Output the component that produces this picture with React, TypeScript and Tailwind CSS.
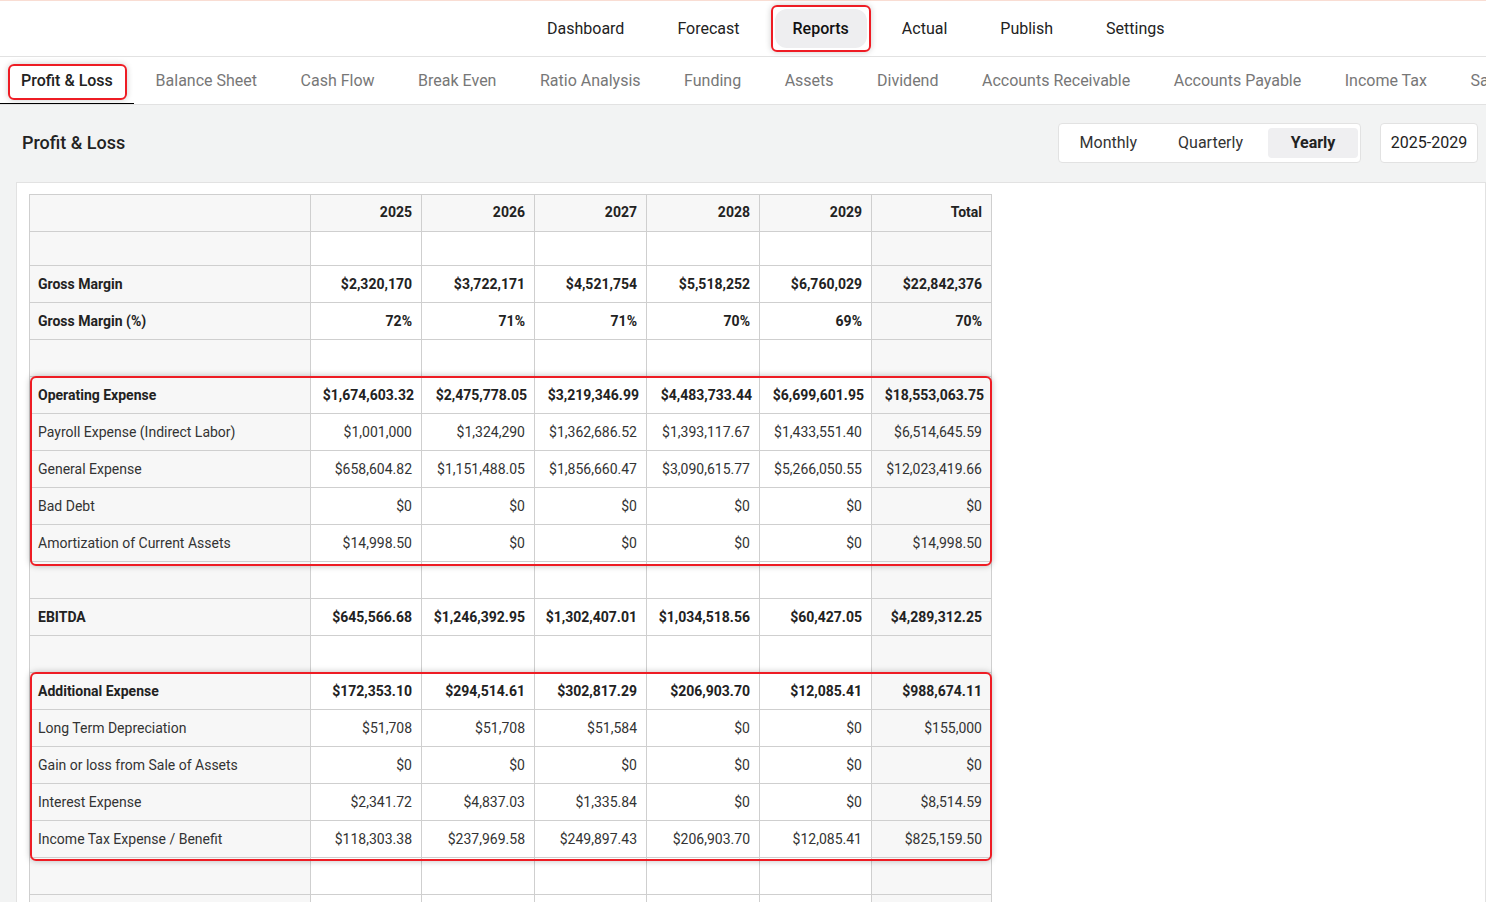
import React from "react";

const topNav = ["Dashboard", "Forecast", "Reports", "Actual", "Publish", "Settings"];
const tabs = [
  "Profit & Loss",
  "Balance Sheet",
  "Cash Flow",
  "Break Even",
  "Ratio Analysis",
  "Funding",
  "Assets",
  "Dividend",
  "Accounts Receivable",
  "Accounts Payable",
  "Income Tax",
  "Sales Tax",
];

type Row = { label?: string; bold?: boolean; values?: string[]; short?: boolean; tight?: boolean };

const z6 = ["$0", "$0", "$0", "$0", "$0", "$0"];

const rows: Row[] = [
  { short: true },
  { label: "Gross Margin", bold: true, values: ["$2,320,170", "$3,722,171", "$4,521,754", "$5,518,252", "$6,760,029", "$22,842,376"] },
  { label: "Gross Margin (%)", bold: true, values: ["72%", "71%", "71%", "70%", "69%", "70%"] },
  {},
  { label: "Operating Expense", bold: true, tight: true, values: ["$1,674,603.32", "$2,475,778.05", "$3,219,346.99", "$4,483,733.44", "$6,699,601.95", "$18,553,063.75"] },
  { label: "Payroll Expense (Indirect Labor)", values: ["$1,001,000", "$1,324,290", "$1,362,686.52", "$1,393,117.67", "$1,433,551.40", "$6,514,645.59"] },
  { label: "General Expense", values: ["$658,604.82", "$1,151,488.05", "$1,856,660.47", "$3,090,615.77", "$5,266,050.55", "$12,023,419.66"] },
  { label: "Bad Debt", values: z6 },
  { label: "Amortization of Current Assets", values: ["$14,998.50", "$0", "$0", "$0", "$0", "$14,998.50"] },
  {},
  { label: "EBITDA", bold: true, values: ["$645,566.68", "$1,246,392.95", "$1,302,407.01", "$1,034,518.56", "$60,427.05", "$4,289,312.25"] },
  {},
  { label: "Additional Expense", bold: true, values: ["$172,353.10", "$294,514.61", "$302,817.29", "$206,903.70", "$12,085.41", "$988,674.11"] },
  { label: "Long Term Depreciation", values: ["$51,708", "$51,708", "$51,584", "$0", "$0", "$155,000"] },
  { label: "Gain or loss from Sale of Assets", values: z6 },
  { label: "Interest Expense", values: ["$2,341.72", "$4,837.03", "$1,335.84", "$0", "$0", "$8,514.59"] },
  { label: "Income Tax Expense / Benefit", values: ["$118,303.38", "$237,969.58", "$249,897.43", "$206,903.70", "$12,085.41", "$825,159.50"] },
  {},
  {},
];

const colWidths = ["w-[281px]", "w-[111px]", "w-[113px]", "w-[112px]", "w-[113px]", "w-[112px]", "w-[120px]"];

export default function App() {
  return (
    <div className="w-[1486px] h-[902px] overflow-hidden bg-[#f2f3f3] text-[#222]" style={{ fontFamily: "Roboto, 'Noto Sans', sans-serif" }}>
      {/* Top nav */}
      <div className="h-px bg-[#f9ddd3]" />
      <div className="bg-white h-[56px] border-b border-[#e2e2e2] flex items-center pl-[529px]">
        <div className="flex items-center gap-[17px]">
          {topNav.map((n) =>
            n === "Reports" ? (
              <div key={n} className="relative">
                <div className="h-[39px] px-[18px] flex items-center rounded-[12px] bg-[#eeeef0] text-[16px] text-[#111] font-medium">{n}</div>
                <div className="absolute -left-[4px] -right-[4px] -top-[4px] -bottom-[4px] border-2 border-[#ee1c24] rounded-[6px] shadow-[0_0_6px_rgba(0,0,0,0.2)] pointer-events-none" />
              </div>
            ) : (
              <div key={n} className="h-[39px] px-[18px] flex items-center text-[16px] text-[#222]">
                {n}
              </div>
            )
          )}
        </div>
      </div>

      {/* Tabs */}
      <div className="bg-white h-[48px] border-b border-[#e2e2e2] flex items-stretch whitespace-nowrap overflow-hidden">
        {tabs.map((t, i) =>
          i === 0 ? (
            <div key={t} className="relative pl-[21px] pr-[21px] pt-[1px] flex items-center border-b-2 border-black -mb-px">
              <span className="text-[16px] text-[#222] font-medium">{t}</span>
              <div className="absolute left-[8px] right-[7px] top-[7px] bottom-[3px] border-2 border-[#ee1c24] rounded-[6px] shadow-[0_0_6px_rgba(0,0,0,0.2)] pointer-events-none" />
            </div>
          ) : (
            <div key={t} className="px-[21.75px] pt-[1px] flex items-center text-[16px] text-[#777]">
              {t}
            </div>
          )
        )}
      </div>

      {/* Title row */}
      <div className="h-[77px] flex items-center pl-[22px] pr-[8px] pb-[2px]">
        <div className="text-[18px] text-[#222] font-medium">Profit &amp; Loss</div>
        <div className="ml-auto flex items-center gap-[19px]">
          <div className="h-[40px] bg-white border border-[#e2e2e2] rounded-[4px] flex items-center pl-[3px] pr-[2px] text-[16px]">
            <div className="px-[18px] h-[30px] flex items-center text-[#333]">Monthly</div>
            <div className="pl-[23px] pr-[25px] h-[30px] flex items-center text-[#333]">Quarterly</div>
            <div className="w-[90px] h-[30px] flex items-center justify-center rounded-[4px] bg-[#efeff1] font-bold text-[#222]">Yearly</div>
          </div>
          <div className="h-[40px] w-[98px] bg-white border border-[#e2e2e2] rounded-[4px] flex items-center justify-center text-[16px] text-[#222]">
            2025-2029
          </div>
        </div>
      </div>

      {/* Card */}
      <div className="ml-[16px] bg-white border border-[#e2e2e2] pt-[11px] pl-[12px] h-[800px]">
        <div className="relative w-[962px]">
          <table className="table-fixed border-collapse text-[14px] text-[#333] w-[962px]">
            <colgroup>
              {colWidths.map((w, i) => (
                <col key={i} className={w} />
              ))}
            </colgroup>
            <thead>
              <tr className="h-[37px]">
                <th className="border border-[#cfcfcf] bg-[#f7f7f7]" />
                {["2025", "2026", "2027", "2028", "2029", "Total"].map((y) => (
                  <th key={y} className="border border-[#cfcfcf] bg-[#f7f7f7] text-right px-[9px] pb-[2px] font-bold text-[#222]">
                    {y}
                  </th>
                ))}
              </tr>
            </thead>
            <tbody>
              {rows.map((r, ri) => (
                <tr key={ri} className={r.short ? "h-[34px]" : "h-[37px]"}>
                  <td className={`border border-[#cfcfcf] bg-[#f7f7f7] pl-[8px] pr-[9px] whitespace-nowrap ${r.bold ? "font-bold text-[#222]" : ""}`}>{r.label ?? ""}</td>
                  {[0, 1, 2, 3, 4, 5].map((c) => (
                    <td
                      key={c}
                      className={`border border-[#cfcfcf] text-right whitespace-nowrap ${r.tight ? "px-[7px]" : "px-[9px]"} ${c === 5 ? "bg-[#f7f7f7]" : "bg-white"} ${r.bold ? "font-bold text-[#222]" : ""}`}
                    >
                      {r.values ? r.values[c] : ""}
                    </td>
                  ))}
                </tr>
              ))}
            </tbody>
          </table>
          <div className="absolute left-[1px] top-[182px] w-[962px] h-[190px] border-2 border-[#ee1c24] rounded-[6px] shadow-[0_0_6px_rgba(0,0,0,0.25)] pointer-events-none" />
          <div className="absolute left-[1px] top-[478px] w-[962px] h-[189px] border-2 border-[#ee1c24] rounded-[6px] shadow-[0_0_6px_rgba(0,0,0,0.25)] pointer-events-none" />
        </div>
      </div>
    </div>
  );
}
